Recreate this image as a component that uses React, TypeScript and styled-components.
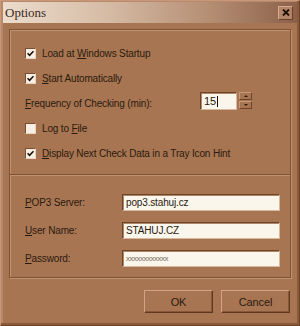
import React from 'react'
import styled, { createGlobalStyle } from 'styled-components'

const GlobalStyle = createGlobalStyle`
  html, body {
    margin: 0;
    padding: 0;
    background: #a87552;
  }
`

const Window = styled.div`
  box-sizing: border-box;
  width: 300px;
  height: 326px;
  display: flex;
  flex-direction: column;
  background: #a87552;
  border: 1px solid #6e4328;
  border-top-color: #c8987a;
  border-left-color: #c8987a;
  box-shadow: inset -2px -2px 0 #8a5a3a, inset 2px 2px 0 #b9876a;
  font-family: 'Liberation Sans', Arial, sans-serif;
  font-size: 10px;
  letter-spacing: -0.15px;
  color: #2a1a0e;
`

const TitleBar = styled.div`
  height: 21px;
  margin: 1px 2px 0 2px;
  display: flex;
  align-items: center;
  justify-content: space-between;
  padding: 0 4px 0 2px;
  background: linear-gradient(90deg, #ecdccc 0%, #d6bca6 35%, #b58e74 70%, #8c604a 100%);
`

const Title = styled.span`
  font-family: 'Liberation Serif', 'Times New Roman', serif;
  font-size: 13px;
  letter-spacing: 0;
  color: #3a2a1e;
`

const CloseButton = styled.div`
  box-sizing: border-box;
  width: 15px;
  height: 14px;
  display: flex;
  align-items: center;
  justify-content: center;
  background: #b48468;
  border: 1px solid;
  border-color: #d4ac90 #6a4028 #6a4028 #d4ac90;
`

const Body = styled.div`
  flex: 1;
  display: flex;
  flex-direction: column;
  padding: 6px 8px 0 8px;
`

const GroupBox = styled.div`
  box-sizing: border-box;
  height: 249px;
  display: flex;
  flex-direction: column;
  border: 1px solid #7e5234;
  box-shadow: inset 1px 1px 0 #c2926e, 1px 1px 0 #c2926e;
`

const CheckSection = styled.div`
  box-sizing: border-box;
  display: flex;
  flex-direction: column;
  padding: 11px 0 0 15px;
  height: 144px;
`

const Row = styled.div`
  height: 25px;
  display: flex;
  align-items: center;
`

const Box = styled.div`
  box-sizing: border-box;
  width: 11px;
  height: 11px;
  margin-right: 6px;
  display: flex;
  align-items: center;
  justify-content: center;
  background: #f7efe4;
  border: 1px solid;
  border-color: #7a4e30 #e8d4c0 #e8d4c0 #7a4e30;
`

const Label = styled.span`
  white-space: nowrap;
`

const Key = styled.span`
  text-decoration: underline;
`

const Divider = styled.div`
  height: 0;
  border-top: 1px solid #7e5234;
  border-bottom: 1px solid #c2926e;
`

const FreqRow = styled(Row)`
  justify-content: space-between;
  padding-right: 38px;
`

const Spin = styled.div`
  display: flex;
  align-items: flex-start;
  gap: 2px;
  margin-top: -5px;
`

const Input = styled.div`
  box-sizing: border-box;
  height: 17px;
  display: flex;
  align-items: center;
  padding-left: 3px;
  background: #fbf6ec;
  border: 1px solid;
  border-color: #6e4428 #d8b89c #d8b89c #6e4428;
  box-shadow: inset 1px 1px 0 #b08668;
  white-space: nowrap;
  font-size: 10px;
`

const SpinInput = styled(Input)`
  width: 37px;
  height: 18px;
  font-size: 11px;
`

const Caret = styled.span`
  display: inline-block;
  width: 1px;
  height: 11px;
  background: #1a1008;
  margin-left: 1px;
`

const SpinButtons = styled.div`
  display: flex;
  flex-direction: column;
  gap: 1px;
`

const SpinButton = styled.div`
  box-sizing: border-box;
  width: 13px;
  height: 8px;
  display: flex;
  align-items: center;
  justify-content: center;
  background: #a87552;
  border: 1px solid;
  border-color: #c8987a #6e4328 #6e4328 #c8987a;
`

const Arrow = styled.div<{ up?: boolean }>`
  width: 0;
  height: 0;
  border-left: 2px solid transparent;
  border-right: 2px solid transparent;
  ${({ up }) => (up ? 'border-bottom: 2px solid #2a1a0e;' : 'border-top: 2px solid #2a1a0e;')}
`

const ServerGrid = styled.div`
  display: grid;
  grid-template-columns: 97px 158px;
  grid-auto-rows: 17px;
  row-gap: 11px;
  align-items: center;
  padding: 18px 0 0 15px;
`

const Password = styled(Input)`
  font-size: 8px;
  letter-spacing: -0.5px;
  color: #7a6a5c;
`

const Footer = styled.div`
  display: flex;
  justify-content: flex-end;
  gap: 8px;
  padding: 12px 1px 0 0;
`

const Button = styled.div`
  box-sizing: border-box;
  width: 69px;
  height: 23px;
  display: flex;
  align-items: center;
  justify-content: center;
  font-size: 11px;
  background: #a87552;
  border: 1px solid;
  border-color: #d2a486 #5e3820 #5e3820 #d2a486;
  box-shadow: inset -1px -1px 0 #87583a;
`

const Check = () => (
  <svg width="7" height="7" viewBox="0 0 7 7">
    <path d="M0.5 3.2 L2.6 5.4 L6.5 1.2" fill="none" stroke="#1a1008" strokeWidth="1.6" />
  </svg>
)

const CheckItem: React.FC<{ checked?: boolean; children: React.ReactNode }> = ({ checked, children }) => (
  <Row>
    <Box>{checked && <Check />}</Box>
    <Label>{children}</Label>
  </Row>
)

const App: React.FC = () => {
  return (
    <>
      <GlobalStyle />
      <Window>
        <TitleBar>
          <Title>Options</Title>
          <CloseButton>
            <svg width="8" height="7" viewBox="0 0 8 7">
              <path d="M1 0.5 L7 6.5 M7 0.5 L1 6.5" stroke="#1a1008" strokeWidth="1.8" />
            </svg>
          </CloseButton>
        </TitleBar>
        <Body>
          <GroupBox>
            <CheckSection>
              <CheckItem checked>
                Load at <Key>W</Key>indows Startup
              </CheckItem>
              <CheckItem checked>
                <Key>S</Key>tart Automatically
              </CheckItem>
              <FreqRow>
                <Label>
                  <Key>F</Key>requency of Checking (min):
                </Label>
                <Spin>
                  <SpinInput>
                    15<Caret />
                  </SpinInput>
                  <SpinButtons>
                    <SpinButton>
                      <Arrow up />
                    </SpinButton>
                    <SpinButton>
                      <Arrow />
                    </SpinButton>
                  </SpinButtons>
                </Spin>
              </FreqRow>
              <CheckItem>
                Log to <Key>F</Key>ile
              </CheckItem>
              <CheckItem checked>
                <Key>D</Key>isplay Next Check Data in a Tray Icon Hint
              </CheckItem>
            </CheckSection>
            <Divider />
            <ServerGrid>
              <Label>
                <Key>P</Key>OP3 Server:
              </Label>
              <Input>pop3.stahuj.cz</Input>
              <Label>
                <Key>U</Key>ser Name:
              </Label>
              <Input>STAHUJ.CZ</Input>
              <Label>
                <Key>P</Key>assword:
              </Label>
              <Password>xxxxxxxxxxxx</Password>
            </ServerGrid>
          </GroupBox>
          <Footer>
            <Button>OK</Button>
            <Button>Cancel</Button>
          </Footer>
        </Body>
      </Window>
    </>
  )
}

export default App
